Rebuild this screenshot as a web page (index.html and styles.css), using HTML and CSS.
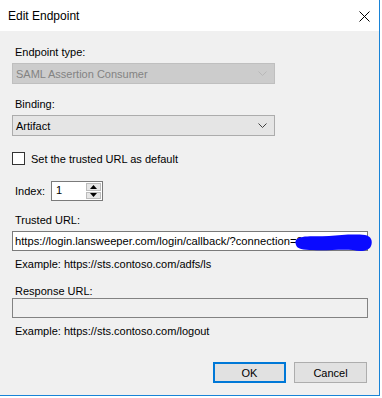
FILE: index.html
```html
<!DOCTYPE html>
<html lang="en">
<head>
    <meta charset="UTF-8">
    <title>Edit Endpoint</title>
    <link rel="stylesheet" href="styles.css">
</head>
<body>
    <div class="window">
        <div class="title-bar">
            <span class="title">Edit Endpoint</span>
            <svg class="close" width="11" height="11" viewBox="0 0 11 11">
                <path d="M0.5 0.5 L10.5 10.5 M10.5 0.5 L0.5 10.5" stroke="#000" stroke-width="1" fill="none"/>
            </svg>
        </div>

        <div class="content">
            <div class="label first">Endpoint type:</div>
            <div class="select disabled">
                <span>SAML Assertion Consumer</span>
                <svg class="chevron" width="9" height="5" viewBox="0 0 9 5">
                    <path d="M0.5 0.5 L4.5 4.5 L8.5 0.5" stroke="#b8b8b8" fill="none"/>
                </svg>
            </div>

            <div class="label gap">Binding:</div>
            <div class="select">
                <span>Artifact</span>
                <svg class="chevron" width="9" height="5" viewBox="0 0 9 5">
                    <path d="M0.5 0.5 L4.5 4.5 L8.5 0.5" stroke="#404040" fill="none"/>
                </svg>
            </div>

            <div class="check-row">
                <span class="checkbox"></span>
                <span>Set the trusted URL as default</span>
            </div>

            <div class="index-row">
                <span class="index-label">Index:</span>
                <div class="spinner">
                    <span class="spin-value">1</span>
                    <div class="spin-buttons">
                        <span class="spin-btn"><svg width="7" height="4" viewBox="0 0 7 4"><path d="M3.5 0 L7 4 L0 4 Z" fill="#000"/></svg></span>
                        <span class="spin-btn"><svg width="7" height="4" viewBox="0 0 7 4"><path d="M0 0 L7 0 L3.5 4 Z" fill="#000"/></svg></span>
                    </div>
                </div>
            </div>

            <div class="label trusted">Trusted URL:</div>
            <div class="textbox url-box">
                <span class="url-text">https://login.lansweeper.com/login/callback/?connection=0</span>
                <!-- redacted part of the connection id -->
                <svg class="scribble" width="78" height="20" viewBox="0 0 78 20">
                    <path d="M2 6 C8 2 20 4 34 3 C46 2 58 1 70 2 C76 3 78 8 76 13 C74 18 66 19 58 17 C44 16 30 18 18 17 C8 17 2 16 1 12 C0 9 0 8 2 6 Z" fill="#0a0aff"/>
                </svg>
            </div>
            <div class="example">Example: https://sts.contoso.com/adfs/ls</div>

            <div class="label response">Response URL:</div>
            <div class="textbox readonly"></div>
            <div class="example">Example: https://sts.contoso.com/logout</div>

            <div class="buttons">
                <button class="btn default">OK</button>
                <button class="btn">Cancel</button>
            </div>
        </div>
    </div>
</body>
</html>
```

FILE: styles.css
```css
body {
    margin: 0;
    background-color: #ffffff;
    font-family: "Liberation Sans", Arial, sans-serif;
    font-size: 11px;
    color: #000;
}

.window {
    width: 379px;
    height: 395px;
    background-color: #f0f0f0;
    border-right: 1px solid #1883d7;
    border-bottom: 1px solid #1883d7;
    display: flex;
    flex-direction: column;
}

.title-bar {
    height: 31px;
    background-color: #ffffff;
    display: flex;
    align-items: center;
    justify-content: space-between;
    padding: 0 9px 0 8px;
}

.title {
    font-size: 12px;
    margin-top: 1px;
}

.close {
    margin-top: 2px;
}

.content {
    display: flex;
    flex-direction: column;
    padding: 0 11px 0 12px;
}

.label {
    line-height: 13px;
    padding-left: 3px;
}

.label.first {
    margin-top: 15px;
}

.label.gap {
    margin-top: 14px;
}

.select {
    width: 263px;
    height: 21px;
    box-sizing: border-box;
    margin-top: 4px;
    border: 1px solid #acacac;
    background-color: #e5e5e5;
    display: flex;
    align-items: center;
    justify-content: space-between;
    padding: 0 7px 0 3px;
}

.select.disabled {
    background-color: #cccccc;
    border-color: #bfbfbf;
    color: #838383;
}

.check-row {
    display: flex;
    align-items: center;
    gap: 6px;
    height: 13px;
    margin-top: 16px;
}

.checkbox {
    width: 13px;
    height: 13px;
    box-sizing: border-box;
    border: 1px solid #333333;
    background-color: #ffffff;
}

.index-row {
    display: flex;
    align-items: center;
    height: 20px;
    margin-top: 16px;
}

.index-label {
    padding-left: 3px;
    width: 36px;
}

.spinner {
    width: 52px;
    height: 20px;
    box-sizing: border-box;
    border: 1px solid #7a7a7a;
    background-color: #ffffff;
    display: flex;
    justify-content: space-between;
    padding: 1px;
}

.spin-value {
    padding: 1px 0 0 3px;
    line-height: 13px;
}

.spin-buttons {
    display: flex;
    flex-direction: column;
    gap: 1px;
    width: 15px;
}

.spin-btn {
    flex: 1;
    background-color: #e6e6e6;
    border: 1px solid #bcbcbc;
    display: flex;
    align-items: center;
    justify-content: center;
}

.label.trusted {
    margin-top: 13px;
}

.textbox {
    width: 356px;
    height: 20px;
    box-sizing: border-box;
    margin-top: 4px;
    border: 1px solid #7a7a7a;
    background-color: #ffffff;
    display: flex;
    align-items: center;
    padding: 0 2px;
    white-space: nowrap;
    position: relative;
}

.textbox.readonly {
    background-color: #f0f0f0;
    border-color: #828282;
}

.url-text {
    font-size: 11.2px;
}

.scribble {
    position: absolute;
    left: 282px;
    top: 1px;
}

.example {
    line-height: 13px;
    padding-left: 3px;
    margin-top: 7px;
}

.label.response {
    margin-top: 14px;
}

.label.response + .textbox {
    margin-top: 0;
}

.buttons {
    display: flex;
    justify-content: flex-end;
    gap: 8px;
    margin-top: 24px;
    padding-right: 1px;
}

.btn {
    width: 73px;
    height: 21px;
    box-sizing: border-box;
    background-color: #e1e1e1;
    border: 1px solid #adadad;
    font-family: "Liberation Sans", Arial, sans-serif;
    font-size: 11px;
    color: #000;
    padding: 0;
}

.btn.default {
    border: 2px solid #0078d7;
}
```
